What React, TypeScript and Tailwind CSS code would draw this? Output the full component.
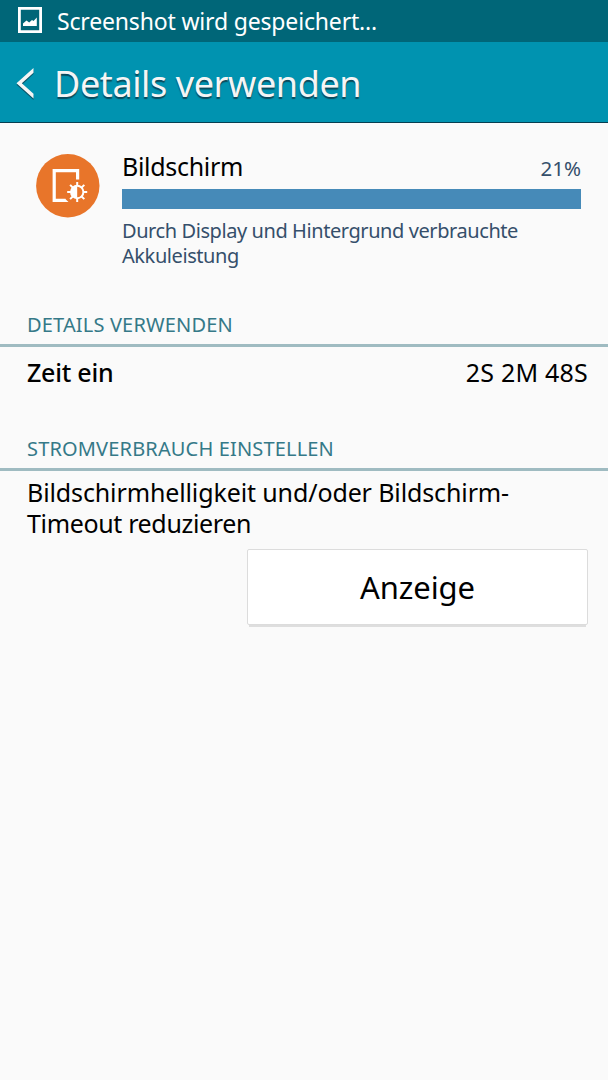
interface SectionHeaderProps {
    title: string;
    className: string;
}

function ImageIcon() {
    return (
        <svg width="24" height="26" viewBox="0 0 24 26" className="shrink-0">
            <path d="M0 0H24V26H0ZM2.8 2.8V23.2H21.2V2.8Z" fill="#fff" fillRule="evenodd" />
            <path d="M5 19V16.5L8.5 13.5L11.2 15.5L14 13L15.5 14L18.8 10.5V19Z" fill="#fff" />
        </svg>
    );
}

function BackIcon() {
    return (
        <svg width="18" height="32" viewBox="0 0 18 32" className="shrink-0">
            <path d="M17.5 1.5V6L6 16.7L17.5 27.5V32L0.5 16.7Z" fill="#0a5669" />
            <path d="M17.5 0V4.7L5.8 15.2L17.5 25.8V30.5L0.5 15.2Z" fill="#f5f5f5" />
        </svg>
    );
}

function DisplayIcon() {
    return (
        <svg width="64" height="64" viewBox="0 0 64 64" className="shrink-0">
            <circle cx="31.8" cy="31.7" r="31.7" fill="#e8752a" />
            <path d="M41.6 25.5V16.6H18.2V46.4H29.5" fill="none" stroke="#fff" strokeWidth="3.2" />
            <path d="M29 44.8L32.5 48H29Z" fill="#fff" />
            <g stroke="#fff" strokeWidth="2">
                <circle cx="41.2" cy="38" r="6.2" fill="none" />
                <path d="M41.2 28V32M41.2 44V48M31.2 38H35.2M47.2 38H51.2M34.1 30.9L37 33.8M45.4 42.2L48.3 45.1M34.1 45.1L37 42.2M45.4 33.8L48.3 30.9" />
            </g>
            <path d="M41.2 32A6 6 0 0 0 41.2 44Z" fill="#fff" />
        </svg>
    );
}

function SectionHeader({ title, className }: SectionHeaderProps) {
    return (
        <div className={`border-b-[3px] border-[#9fbbc1] px-[27px] pb-[5px] ${className}`}>
            <h2 className="text-xl leading-7 tracking-[0.16px] whitespace-nowrap text-[#357988]">{title}</h2>
        </div>
    );
}

export default function App() {
    return (
        <div className="flex min-h-screen w-full flex-col bg-[#fafafa] font-['Noto_Sans',sans-serif] text-black">
            {/* Status bar */}
            <div className="flex h-[42px] items-center gap-[15px] bg-[#006678] pb-0.5 pl-[18px] text-white">
                <ImageIcon />
                <span className="pt-px text-[23px] leading-10 tracking-[-0.17px] whitespace-nowrap">
                    Screenshot wird gespeichert...
                </span>
            </div>

            {/* Action bar */}
            <header className="flex h-[81px] items-center gap-5 border-b border-[#063e50] bg-[#0093b0] pt-1 pl-4">
                <BackIcon />
                <h1 className="text-[36px] leading-[48px] tracking-[-0.4px] whitespace-nowrap text-[#f5f5f5] [text-shadow:0_1.5px_1px_#0a4a5c]">
                    Details verwenden
                </h1>
            </header>

            <main>
                {/* Usage summary */}
                <section className="flex gap-[22px] pt-[27px] pr-[27px] pl-9">
                    <div className="pt-1">
                        <DisplayIcon />
                    </div>
                    <div className="flex-1">
                        <div className="flex h-8 items-baseline justify-between">
                            <span className="text-[25px] leading-8 tracking-[-0.3px]">Bildschirm</span>
                            <span className="text-[20.5px] leading-8 text-[#354f6b]">21%</span>
                        </div>
                        <div className="mt-[7px] h-5 bg-[#468ab8]" />
                        <p className="mt-[9px] text-xl leading-[25px] tracking-[-0.42px] whitespace-nowrap text-[#354f6b]">
                            Durch Display und Hintergrund verbrauchte
                            <br />
                            Akkuleistung
                        </p>
                    </div>
                </section>

                <SectionHeader title="DETAILS VERWENDEN" className="mt-[43px]" />
                <div className="flex justify-between pt-[9px] pr-5 pl-[27px] text-[25px] leading-8">
                    <span className="font-medium tracking-[-0.25px]">Zeit ein</span>
                    <span className="tracking-[0.2px]">2S 2M 48S</span>
                </div>

                <SectionHeader title="STROMVERBRAUCH EINSTELLEN" className="mt-[47px]" />
                <p className="pt-1.5 pl-[27px] text-[25px] leading-[31px] tracking-[-0.12px] whitespace-nowrap">
                    Bildschirmhelligkeit und/oder Bildschirm-
                    <br />
                    <span className="tracking-[-0.35px]">Timeout reduzieren</span>
                </p>
                <div className="mt-2.5 flex justify-end pr-5">
                    <button className="h-[76px] w-[341px] rounded-xs border border-[#dcdcdc] bg-white text-[31px] leading-10 tracking-[-0.1px] shadow-[0_4px_0_-2px_#dedede]">
                        Anzeige
                    </button>
                </div>
            </main>
        </div>
    );
}
